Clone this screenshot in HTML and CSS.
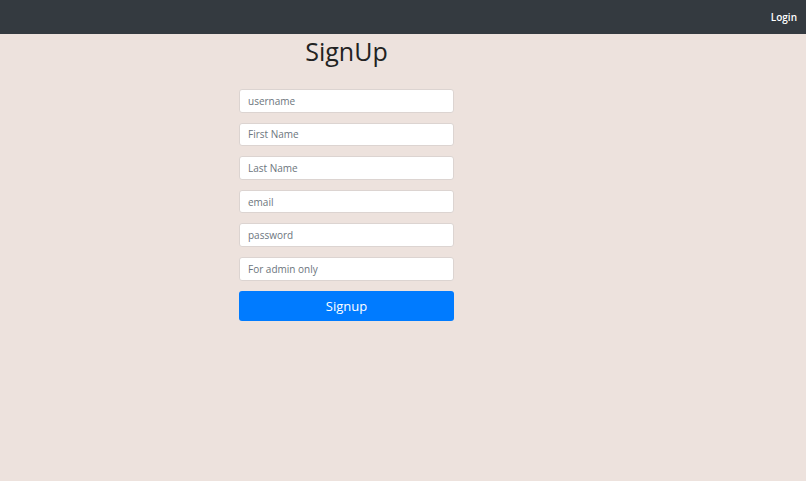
FILE: index.html
```html
<!DOCTYPE html>
<html>
<head>
<meta charset="utf-8">
<link rel="stylesheet" href="styles.css">
</head>
<body>
<nav class="navbar">
  <a class="nav-link" href="#">Login</a>
</nav>
<main class="page">
  <form class="signup">
    <h1 class="title">SignUp</h1>
    <div class="fields">
      <input class="field" type="text" placeholder="username">
      <input class="field" type="text" placeholder="First Name">
      <input class="field" type="text" placeholder="Last Name">
      <input class="field" type="text" placeholder="email">
      <input class="field" type="password" placeholder="password">
      <input class="field" type="text" placeholder="For admin only">
      <button class="btn" type="button">Signup</button>
    </div>
  </form>
</main>
</body>
</html>
```
FILE: styles.css
```css
html, body {
  margin: 0;
  padding: 0;
  height: 100%;
}
body {
  background: #ede2dd;
  font-family: "Open Sans", "Noto Sans", sans-serif;
  color: #212529;
}
.navbar {
  height: 34px;
  background: #343a40;
  display: flex;
  align-items: center;
  justify-content: flex-end;
  padding: 0 9px;
}
.nav-link {
  color: #fff;
  text-decoration: none;
  font-size: 10px;
  font-weight: 600;
}
.page {
  padding-left: 239px;
}
.signup {
  width: 215px;
  display: flex;
  flex-direction: column;
}
.title {
  margin: 0;
  text-align: center;
  font-size: 25px;
  font-weight: 500;
  line-height: 34px;
  height: 34px;
  color: #222;
}
.fields {
  margin-top: 21px;
  display: flex;
  flex-direction: column;
  gap: 10px;
}
.field {
  box-sizing: border-box;
  height: 23.6px;
  width: 100%;
  margin: 0;
  padding: 0 8px;
  border: 1px solid #dcd4d1;
  border-radius: 3px;
  background: #fff;
  font-family: inherit;
  font-size: 10px;
  color: #495057;
}
.field::placeholder {
  color: #6c757d;
}
.btn {
  box-sizing: border-box;
  height: 30px;
  width: 100%;
  margin: 0;
  border: none;
  border-radius: 3px;
  background: #007bff;
  color: #fff;
  font-family: inherit;
  font-size: 13px;
}
```
